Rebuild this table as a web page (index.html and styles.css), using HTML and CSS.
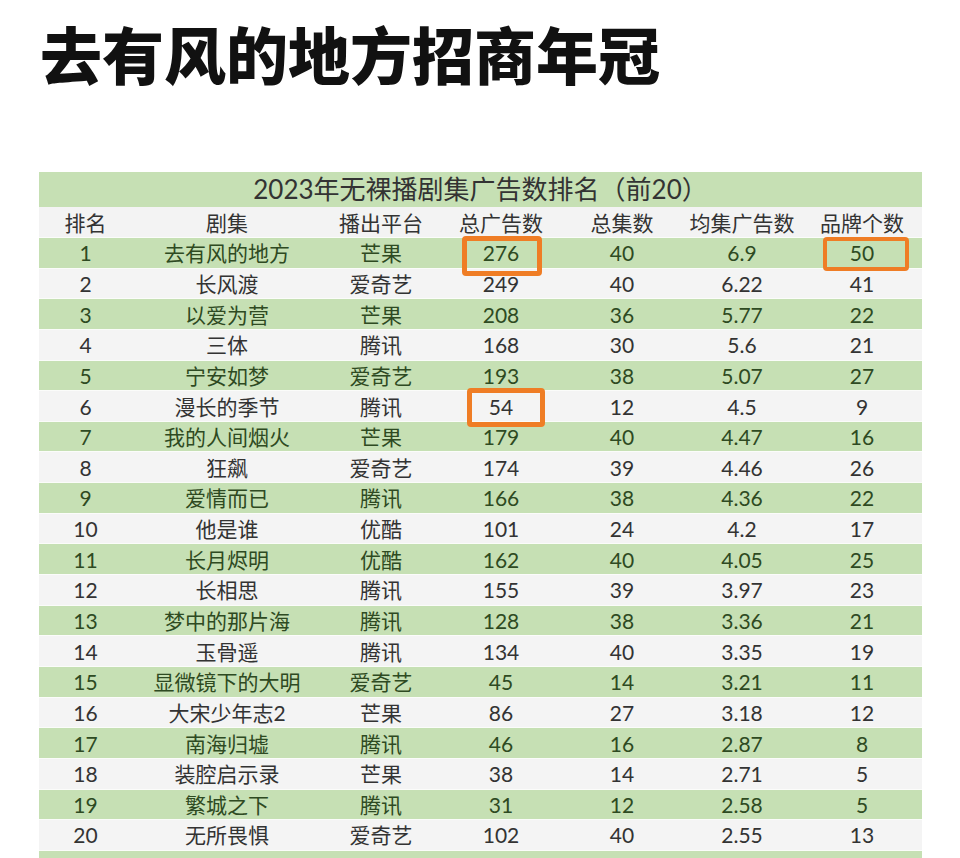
FILE: index.html
```html
<!DOCTYPE html>
<html lang="zh-CN">
<head>
<meta charset="utf-8">
<title>去有风的地方招商年冠</title>
<link rel="stylesheet" href="styles.css">
</head>
<body>
<h1 class="headline">去有风的地方招商年冠</h1>
<div class="sheet">
  <div class="caption">2023年无裸播剧集广告数排名（前20）</div>
  <div class="row head"><span>排名</span><span>剧集</span><span>播出平台</span><span>总广告数</span><span>总集数</span><span>均集广告数</span><span>品牌个数</span></div>
  <div class="row g"><span>1</span><span>去有风的地方</span><span>芒果</span><span>276</span><span>40</span><span>6.9</span><span>50</span></div>
  <div class="row w"><span>2</span><span>长风渡</span><span>爱奇艺</span><span>249</span><span>40</span><span>6.22</span><span>41</span></div>
  <div class="row g"><span>3</span><span>以爱为营</span><span>芒果</span><span>208</span><span>36</span><span>5.77</span><span>22</span></div>
  <div class="row w"><span>4</span><span>三体</span><span>腾讯</span><span>168</span><span>30</span><span>5.6</span><span>21</span></div>
  <div class="row g"><span>5</span><span>宁安如梦</span><span>爱奇艺</span><span>193</span><span>38</span><span>5.07</span><span>27</span></div>
  <div class="row w"><span>6</span><span>漫长的季节</span><span>腾讯</span><span>54</span><span>12</span><span>4.5</span><span>9</span></div>
  <div class="row g"><span>7</span><span>我的人间烟火</span><span>芒果</span><span>179</span><span>40</span><span>4.47</span><span>16</span></div>
  <div class="row w"><span>8</span><span>狂飙</span><span>爱奇艺</span><span>174</span><span>39</span><span>4.46</span><span>26</span></div>
  <div class="row g"><span>9</span><span>爱情而已</span><span>腾讯</span><span>166</span><span>38</span><span>4.36</span><span>22</span></div>
  <div class="row w"><span>10</span><span>他是谁</span><span>优酷</span><span>101</span><span>24</span><span>4.2</span><span>17</span></div>
  <div class="row g"><span>11</span><span>长月烬明</span><span>优酷</span><span>162</span><span>40</span><span>4.05</span><span>25</span></div>
  <div class="row w"><span>12</span><span>长相思</span><span>腾讯</span><span>155</span><span>39</span><span>3.97</span><span>23</span></div>
  <div class="row g"><span>13</span><span>梦中的那片海</span><span>腾讯</span><span>128</span><span>38</span><span>3.36</span><span>21</span></div>
  <div class="row w"><span>14</span><span>玉骨遥</span><span>腾讯</span><span>134</span><span>40</span><span>3.35</span><span>19</span></div>
  <div class="row g"><span>15</span><span>显微镜下的大明</span><span>爱奇艺</span><span>45</span><span>14</span><span>3.21</span><span>11</span></div>
  <div class="row w"><span>16</span><span>大宋少年志2</span><span>芒果</span><span>86</span><span>27</span><span>3.18</span><span>12</span></div>
  <div class="row g"><span>17</span><span>南海归墟</span><span>腾讯</span><span>46</span><span>16</span><span>2.87</span><span>8</span></div>
  <div class="row w"><span>18</span><span>装腔启示录</span><span>芒果</span><span>38</span><span>14</span><span>2.71</span><span>5</span></div>
  <div class="row g"><span>19</span><span>繁城之下</span><span>腾讯</span><span>31</span><span>12</span><span>2.58</span><span>5</span></div>
  <div class="row w"><span>20</span><span>无所畏惧</span><span>爱奇艺</span><span>102</span><span>40</span><span>2.55</span><span>13</span></div>
  <div class="row g tail"></div>
  <div class="mark mark-276"></div>
  <div class="mark mark-50"></div>
  <div class="mark mark-54"></div>
</div>
</body>
</html>
```
FILE: styles.css
```css
html, body {
  margin: 0;
  padding: 0;
  background: #ffffff;
}
body {
  width: 960px;
  height: 858px;
  overflow: hidden;
  font-family: "Lato", "Noto Sans CJK SC", sans-serif;
}
.headline {
  margin: 0;
  padding: 22px 0 0 40px;
  height: 62px;
  font-family: "Noto Sans CJK SC", sans-serif;
  font-weight: 900;
  font-size: 62px;
  line-height: 62px;
  color: #111111;
  letter-spacing: 0;
}
.sheet {
  position: relative;
  margin: 88px 0 0 39px;
  width: 883px;
}
.caption {
  height: 35px;
  line-height: 35px;
  background: #c6e0b4;
  text-align: center;
  font-size: 26px;
  color: #333333;
  font-family: "Lato", "Noto Sans CJK SC", sans-serif;
}
.row {
  display: grid;
  grid-template-columns: 93px 190px 118px 122px 120px 120px 120px;
  height: 30.65px;
  align-items: center;
  font-size: 21px;
  box-sizing: border-box;
  border-bottom: 1px solid #fbfcfa;
}
.row span {
  text-align: center;
  line-height: 29px;
  white-space: nowrap;
}
.head {
  height: 31px;
  background: #f3f3f3;
  color: #333333;
  border-bottom: 1px solid #fbfcfa;
}
.g {
  background: #c6e0b4;
  color: #2e4a22;
}
.w {
  background: #f4f4f4;
  color: #333333;
}
.tail {
  border: 0;
}
.mark {
  position: absolute;
  box-sizing: border-box;
  border: 5px solid #ef7d25;
  border-radius: 4px;
}
.mark-276 {
  left: 423px;
  top: 64px;
  width: 80px;
  height: 40px;
}
.mark-50 {
  left: 784px;
  top: 65px;
  width: 86px;
  height: 34px;
  border-width: 4px;
}
.mark-54 {
  left: 428px;
  top: 216px;
  width: 78px;
  height: 39px;
}
```
